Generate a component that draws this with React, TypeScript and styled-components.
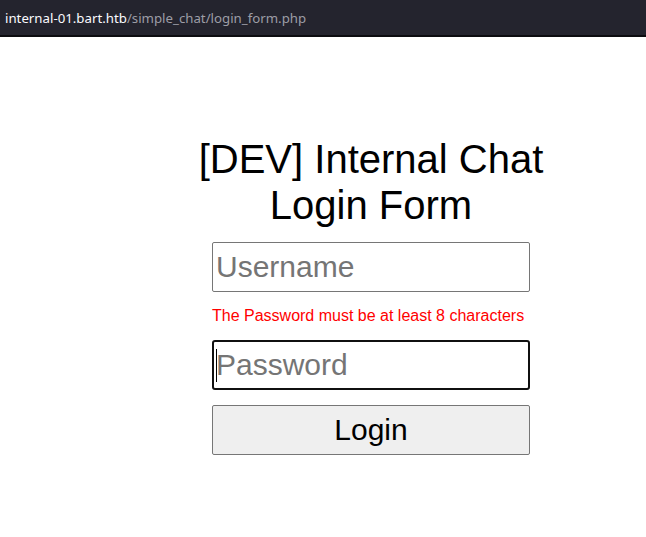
import React from "react";
import styled, { createGlobalStyle } from "styled-components";

const Global = createGlobalStyle`
  html, body { margin: 0; padding: 0; background: #ffffff; }
  body { font-family: "Liberation Sans", Arial, sans-serif; }
`;

const Page = styled.div`
  width: 646px;
  min-height: 537px;
  background: #ffffff;
`;

const AddressBar = styled.div`
  height: 35px;
  background: #24242e;
  border-bottom: 2px solid #0c0c10;
  display: flex;
  align-items: center;
  padding-left: 5px;
  font-family: "Noto Sans", "Open Sans", sans-serif;
  font-size: 13.25px;
  white-space: nowrap;
`;

const Host = styled.span`
  color: #fbfbfe;
`;

const Path = styled.span`
  color: #9d9da6;
`;

const Content = styled.div`
  display: flex;
  flex-direction: column;
  align-items: center;
  width: 400px;
  margin-left: 171px;
  padding-top: 99px;
`;

const Title = styled.h1`
  margin: 0;
  font-family: "Liberation Sans", Arial, sans-serif;
  font-weight: 400;
  font-size: 40px;
  line-height: 46px;
  color: #000000;
  text-align: center;
`;

const Form = styled.form`
  display: flex;
  flex-direction: column;
  width: 318px;
  margin-top: 14px;
`;

const Field = styled.div`
  position: relative;
  display: flex;
`;

const Input = styled.input<{ $focused?: boolean }>`
  box-sizing: border-box;
  width: 318px;
  height: 50px;
  margin: 0;
  padding: 1px 3px;
  font-family: "Liberation Sans", Arial, sans-serif;
  font-size: 30px;
  color: #000;
  background: #ffffff;
  border: ${(p) => (p.$focused ? "2px solid #101010" : "1px solid #767676")};
  border-radius: ${(p) => (p.$focused ? "3px" : "2px")};
  outline: none;
  padding-left: ${(p) => (p.$focused ? "2px" : "3px")};
  &::placeholder {
    color: #757575;
    opacity: 1;
  }
`;

const Caret = styled.span`
  position: absolute;
  left: 4px;
  top: 9px;
  width: 1px;
  height: 33px;
  background: #000;
`;

const ErrorText = styled.p`
  margin: 15px 0 15px 0;
  font-family: "Liberation Sans", Arial, sans-serif;
  font-size: 16px;
  line-height: 18px;
  color: #ff0000;
  white-space: nowrap;
`;

const Button = styled.button`
  box-sizing: border-box;
  width: 318px;
  height: 50px;
  margin-top: 15px;
  padding: 0;
  font-family: "Liberation Sans", Arial, sans-serif;
  font-size: 30px;
  color: #000;
  background: #efefef;
  border: 1px solid #767676;
  border-radius: 2px;
`;

export default function App() {
  return (
    <>
      <Global />
      <Page>
        <AddressBar>
          <Host>internal-01.bart.htb</Host>
          <Path>/simple_chat/login_form.php</Path>
        </AddressBar>
        <Content>
          <Title>
            [DEV] Internal Chat
            <br />
            Login Form
          </Title>
          <Form onSubmit={(e) => e.preventDefault()}>
            <Field>
              <Input type="text" placeholder="Username" />
            </Field>
            <ErrorText>The Password must be at least 8 characters</ErrorText>
            <Field>
              <Input type="password" placeholder="Password" $focused />
              <Caret />
            </Field>
            <Button type="submit">Login</Button>
          </Form>
        </Content>
      </Page>
    </>
  );
}
